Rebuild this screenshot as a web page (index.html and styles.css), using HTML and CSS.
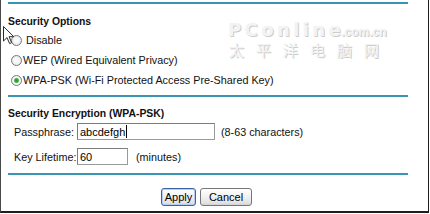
FILE: index.html
```html
<!DOCTYPE html>
<html>
<head>
<meta charset="utf-8">
<link rel="stylesheet" href="styles.css">
</head>
<body>
<div class="frame">
  <div class="rule"></div>
  <section class="sec">
    <h2 class="title title-first">Security Options</h2>
    <div class="opts">
      <label class="opt"><input type="radio" name="sec" class="radio">&nbsp;Disable</label>
      <label class="opt"><input type="radio" name="sec" class="radio">WEP (Wired Equivalent Privacy)</label>
      <label class="opt"><input type="radio" name="sec" class="radio" checked>WPA-PSK (Wi-Fi Protected Access Pre-Shared Key)</label>
    </div>
  </section>
  <div class="rule rule-mid"></div>
  <section class="sec">
    <h2 class="title title-second">Security Encryption (WPA-PSK)</h2>
    <div class="form">
      <span class="lbl">Passphrase:</span>
      <span class="field"><span class="box box-wide">abcdefgh<span class="caret"></span></span><span class="hint hint-chars">(8-63 characters)</span></span>
      <span class="lbl">Key Lifetime:</span>
      <span class="field"><span class="box box-short">60</span><span class="hint hint-min">(minutes)</span></span>
    </div>
  </section>
  <div class="rule rule-low"></div>
  <div class="actions">
    <button class="btn btn-apply">Apply</button>
    <button class="btn btn-cancel">Cancel</button>
  </div>
  <div class="wm">
    <div class="wm-brand">PConline<span class="wm-dom">.com.cn</span></div>
    <div class="wm-cn">太平洋电脑网</div>
  </div>
  <svg class="cursor" width="13" height="20" viewBox="0 0 13 20">
    <path d="M0.5 0.5 L0.5 15 L4 11.6 L6.6 17.6 L8.6 16.7 L6.1 10.7 L10.8 10.7 Z" fill="#fff" stroke="#2a2a2a" stroke-width="1" stroke-linejoin="round"/>
  </svg>
</div>
</body>
</html>
```
FILE: styles.css
```css
html, body {
  margin: 0;
  padding: 0;
  background: #fff;
}
body {
  font-family: "Liberation Sans", Arial, sans-serif;
  color: #111;
}
.frame {
  position: relative;
  width: 429px;
  height: 213px;
  box-sizing: border-box;
  border-left: 1px solid #4a4a4a;
  border-right: 1px solid #1e1e1e;
  border-bottom: 2px solid #1e1e1e;
  padding: 2px 0 0 7px;
  background: #fff;
  overflow: hidden;
}
.rule {
  width: 400px;
  height: 2px;
  background: #3a94b3;
}
.rule-mid {
  margin-top: 5px;
}
.rule-low {
  margin-top: 8px;
}
.sec {
  margin: 0;
}
.title {
  margin: 0;
  font-size: 10.4px;
  font-weight: bold;
  line-height: 13px;
  color: #111;
}
.title-first {
  margin-top: 11px;
}
.title-second {
  margin-top: 10px;
}
.opts {
  display: flex;
  flex-direction: column;
  margin-top: 2px;
}
.opt {
  display: flex;
  align-items: center;
  height: 20px;
  font-size: 10.8px;
  white-space: nowrap;
}
.radio {
  appearance: none;
  -webkit-appearance: none;
  box-sizing: border-box;
  width: 11px;
  height: 11px;
  margin: 0 1px 0 3px;
  border: 1px solid #6f7986;
  border-radius: 50%;
  background: radial-gradient(circle at 50% 50%, #ffffff 0, #f4f4f4 45%, #dcdcdc 100%);
}
.radio:checked {
  background: radial-gradient(circle at 50% 50%, #2a9a2a 0, #3aa83a 1.8px, #a6dba6 2.6px, #ffffff 3.2px, #e2e2e2 100%);
}
.form {
  display: grid;
  grid-template-columns: 63px auto;
  row-gap: 8px;
  align-items: center;
  margin: 3px 0 0 6px;
  font-size: 10.8px;
}
.lbl {
  white-space: nowrap;
}
.field {
  display: flex;
  align-items: center;
  white-space: nowrap;
}
.box {
  display: flex;
  align-items: center;
  box-sizing: border-box;
  height: 17px;
  padding-left: 2px;
  border: 1px solid #9a9a9a;
  border-top-color: #7c7c7c;
  border-left-color: #7c7c7c;
  background: #fff;
  font-size: 11px;
  color: #000;
}
.box-wide {
  width: 138px;
}
.box-short {
  width: 51px;
}
.caret {
  display: inline-block;
  width: 1px;
  height: 13px;
  margin-left: 1px;
  background: #000;
}
.hint-chars {
  margin-left: 6px;
}
.hint-min {
  margin-left: 8px;
}
.actions {
  display: flex;
  justify-content: center;
  gap: 4px;
  width: 400px;
  box-sizing: border-box;
  padding-right: 3px;
  margin-top: 13px;
}
.btn {
  height: 18px;
  padding: 0;
  font-family: "Liberation Sans", Arial, sans-serif;
  font-size: 11px;
  color: #000;
  border: 1px solid #767676;
  border-radius: 3px;
  background: linear-gradient(#ffffff, #f2f2f2 45%, #e2e2e2 85%, #d4d4d4);
}
.btn-apply {
  width: 35px;
  border-color: #3b62a8;
  box-shadow: inset 0 0 0 1px #b6cdf0;
}
.btn-cancel {
  width: 52px;
}
.wm {
  position: absolute;
  left: 227px;
  top: 20px;
  color: #f3f3f3;
  text-shadow: 1px 1px 0 #cdcdcd, -1px -1px 0 #ffffff, 0 0 1px #d8d8d8;
  white-space: nowrap;
}
.wm-brand {
  font-family: "DejaVu Sans", sans-serif;
  font-weight: bold;
  font-size: 18px;
  letter-spacing: 3.4px;
  line-height: 19px;
}
.wm-dom {
  font-family: "Liberation Sans", sans-serif;
  font-size: 12px;
  letter-spacing: 0;
  margin-left: -3px;
}
.wm-cn {
  font-family: "Noto Sans CJK SC", sans-serif;
  font-weight: normal;
  font-size: 15px;
  letter-spacing: 12px;
  line-height: 16px;
  margin-left: 1px;
}
.cursor {
  position: absolute;
  left: 2px;
  top: 26px;
}
```
